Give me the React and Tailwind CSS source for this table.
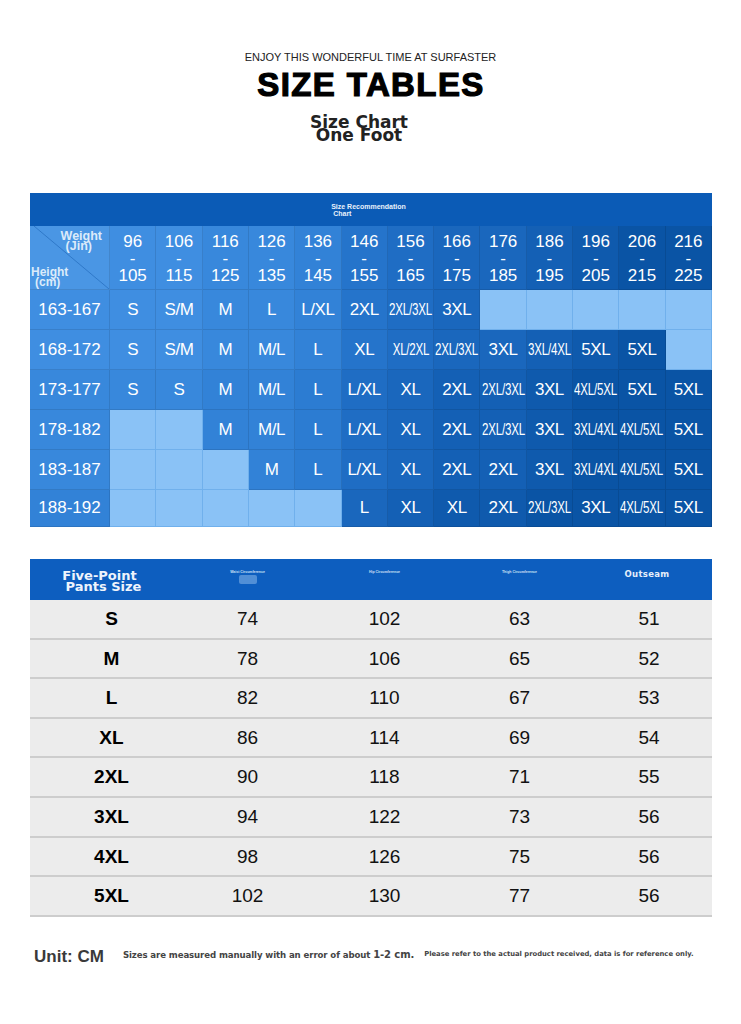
import React from "react";

const SHADES = [
  "bg-[#4694e4]",
  "bg-[#3f8ee1]",
  "bg-[#3888dc]",
  "bg-[#3282d7]",
  "bg-[#2c7cd2]",
  "bg-[#2574cb]",
  "bg-[#1f6dc4]",
  "bg-[#1a67bd]",
  "bg-[#1460b5]",
  "bg-[#0f5aad]",
  "bg-[#0a54a5]",
];
const COL_LEVEL = [1, 1, 1, 2, 2, 3, 5, 6, 7, 7, 8, 9, 10, 10];
const ROW_ADD = [0, 0, 1, 1, 1, 2];

const WEIGHTS = [
  ["96", "105"],
  ["106", "115"],
  ["116", "125"],
  ["126", "135"],
  ["136", "145"],
  ["146", "155"],
  ["156", "165"],
  ["166", "175"],
  ["176", "185"],
  ["186", "195"],
  ["196", "205"],
  ["206", "215"],
  ["216", "225"],
];

const ROWS = [
  ["163-167", "S", "S/M", "M", "L", "L/XL", "2XL", "2XL/3XL", "3XL", "", "", "", "", ""],
  ["168-172", "S", "S/M", "M", "M/L", "L", "XL", "XL/2XL", "2XL/3XL", "3XL", "3XL/4XL", "5XL", "5XL", ""],
  ["173-177", "S", "S", "M", "M/L", "L", "L/XL", "XL", "2XL", "2XL/3XL", "3XL", "4XL/5XL", "5XL", "5XL"],
  ["178-182", "", "", "M", "M/L", "L", "L/XL", "XL", "2XL", "2XL/3XL", "3XL", "3XL/4XL", "4XL/5XL", "5XL"],
  ["183-187", "", "", "", "M", "L", "L/XL", "XL", "2XL", "2XL", "3XL", "3XL/4XL", "4XL/5XL", "5XL"],
  ["188-192", "", "", "", "", "", "L", "XL", "XL", "2XL", "2XL/3XL", "3XL", "4XL/5XL", "5XL"],
];

const PANTS = [
  ["S", "74", "102", "63", "51"],
  ["M", "78", "106", "65", "52"],
  ["L", "82", "110", "67", "53"],
  ["XL", "86", "114", "69", "54"],
  ["2XL", "90", "118", "71", "55"],
  ["3XL", "94", "122", "73", "56"],
  ["4XL", "98", "126", "75", "56"],
  ["5XL", "102", "130", "77", "56"],
];

function shade(col, row) {
  const lvl = Math.min(10, COL_LEVEL[col] + (row < 0 ? 0 : ROW_ADD[row]));
  return SHADES[lvl];
}

function SizeLabel({ text }) {
  if (text.length >= 6) {
    return (
      <span className="inline-block shrink-0 scale-x-[0.68] whitespace-nowrap tracking-[-0.3px]">
        {text}
      </span>
    );
  }
  return <span className="shrink-0 whitespace-nowrap tracking-[-0.4px]">{text}</span>;
}

function TopTable() {
  return (
    <div className="ml-[30px] w-[682px] font-['Liberation_Sans',Arial,sans-serif] text-white">
      <div className="flex h-[33px] items-start justify-center bg-[#0b5bb6] pt-[10px] pr-[5px]">
        <div className="text-[7px] font-bold leading-[7px] text-[#e8f1fb]">
          <div>Size Recommendation</div>
          <div className="pl-[2px]">Chart</div>
        </div>
      </div>
      <div className="grid h-[64px] grid-cols-[80px_repeat(13,minmax(0,1fr))]">
        <div className="relative flex flex-col justify-between border-r border-b border-black/10 bg-[#4a96e4]">
          <svg className="absolute inset-0 h-full w-full" viewBox="0 0 80 64" preserveAspectRatio="none">
            <line x1="4" y1="0" x2="80" y2="64" stroke="#2f78c8" strokeWidth="1" />
          </svg>
          <div className="relative self-end pr-[7px] pt-[5px] text-[12.5px] font-bold leading-[10px] text-[#dcebfa]">
            <div>Weight</div>
            <div className="pl-[5px]">(Jin)</div>
          </div>
          <div className="relative self-start pb-[2px] pl-[1px] text-[12px] font-bold leading-[10px] text-[#dcebfa]">
            <div>Height</div>
            <div className="pl-[4px]">(cm)</div>
          </div>
        </div>
        {WEIGHTS.map((w, i) => (
          <div
            key={i}
            className={`flex min-w-0 flex-col items-center justify-center border-r border-b border-black/10 pt-[2px] text-[17px] leading-[17px] ${shade(i + 1, -1)}`}
          >
            <div>{w[0]}</div>
            <div>-</div>
            <div>{w[1]}</div>
          </div>
        ))}
      </div>
      {ROWS.map((row, r) => (
        <div
          key={r}
          className={`grid grid-cols-[80px_repeat(13,minmax(0,1fr))] ${r === ROWS.length - 1 ? "h-[37px]" : "h-[40px]"}`}
        >
          {row.map((cell, c) => {
            if (c > 0 && cell === "") {
              return (
                <div
                  key={c}
                  className="min-w-0 border-r border-b border-[#70b0ec] bg-[#8ac2f6]"
                />
              );
            }
            return (
              <div
                key={c}
                className={`flex min-w-0 items-center justify-center overflow-visible border-r border-b border-black/10 text-[17px] ${shade(c, r)}`}
              >
                {c === 0 ? <span>{cell}</span> : <SizeLabel text={cell} />}
              </div>
            );
          })}
        </div>
      ))}
    </div>
  );
}

function BottomTable() {
  return (
    <div className="ml-[30px] w-[682px] font-['Liberation_Sans',Arial,sans-serif]">
      <div className="grid h-[41px] grid-cols-[149px_137px_137px_133px_1fr] bg-[#0d5ebf]">
        <div className="flex flex-col items-center justify-center pt-[2px] pr-[10px] font-['DejaVu_Sans',sans-serif] text-[13px] font-bold leading-[11px] text-[#eef4fc]">
          <div>Five-Point</div>
          <div className="pl-[8px]">Pants Size</div>
        </div>
        <div className="flex flex-col items-center pt-[11px]">
          <div className="text-[3.5px] font-bold leading-[4px] text-[#cfe0f5]">Waist Circumference</div>
          <div className="mt-[1px] h-[9px] w-[18px] rounded-[2px] bg-[#6fa4e0]/70" />
        </div>
        <div className="flex justify-center pt-[11px]">
          <div className="text-[3.5px] font-bold leading-[4px] text-[#cfe0f5]">Hip Circumference</div>
        </div>
        <div className="flex justify-center pt-[11px]">
          <div className="text-[3.5px] font-bold leading-[4px] text-[#cfe0f5]">Thigh Circumference</div>
        </div>
        <div className="flex justify-center pt-[9px] pr-[4px]">
          <div className="font-['DejaVu_Sans',sans-serif] text-[8.5px] font-bold tracking-[0.3px] text-[#e6eefa]">Outseam</div>
        </div>
      </div>
      {PANTS.map((row, r) => (
        <div
          key={r}
          className="grid h-[39.6px] grid-cols-[149px_137px_137px_133px_1fr] border-b-2 border-[#cdcdcd] bg-[#ececec] text-[19px] text-[#111]"
        >
          {row.map((cell, c) => (
            <div
              key={c}
              className={`flex items-center justify-center pt-[1px] ${c === 0 ? "pl-[14px] font-bold text-black" : ""}`}
            >
              {cell}
            </div>
          ))}
        </div>
      ))}
    </div>
  );
}

export default function App() {
  return (
    <div className="min-h-[1024px] w-[741px] bg-white">
      <div className="pt-[51px] text-center font-['Liberation_Sans',Arial,sans-serif] text-[11px] leading-[12px] text-[#222]">
        ENJOY THIS WONDERFUL TIME AT SURFASTER
      </div>
      <div className="mt-[5px] pl-[1px] text-center font-['Liberation_Sans',Arial,sans-serif] text-[33px] font-bold leading-[33px] tracking-[1.4px] text-black [-webkit-text-stroke:1.2px_black]">
        SIZE TABLES
      </div>
      <div className="mt-[15px] flex justify-center pr-[23px]">
        <div className="flex flex-col items-center font-['DejaVu_Sans',sans-serif] text-[17px] font-bold leading-[13px] text-[#222]">
          <div>Size Chart</div>
          <div>One Foot</div>
        </div>
      </div>
      <div className="mt-[51px]">
        <TopTable />
      </div>
      <div className="mt-[32px]">
        <BottomTable />
      </div>
      <div className="mt-[27px] flex items-center pl-[34px] font-['DejaVu_Sans',sans-serif] font-bold text-[#3a3a3a]">
        <div className="font-['Liberation_Sans',Arial,sans-serif] text-[17px]">Unit: CM</div>
        <div className="ml-[19px] mb-[5px] text-[8.6px] tracking-[-0.1px] text-[#444]">
          Sizes are measured manually with an error of about <span className="text-[10px]">1-2 cm.</span>
        </div>
        <div className="ml-[10px] mb-[5px] text-[6.8px] text-[#444]">
          Please refer to the actual product received, data is for reference only.
        </div>
      </div>
    </div>
  );
}
